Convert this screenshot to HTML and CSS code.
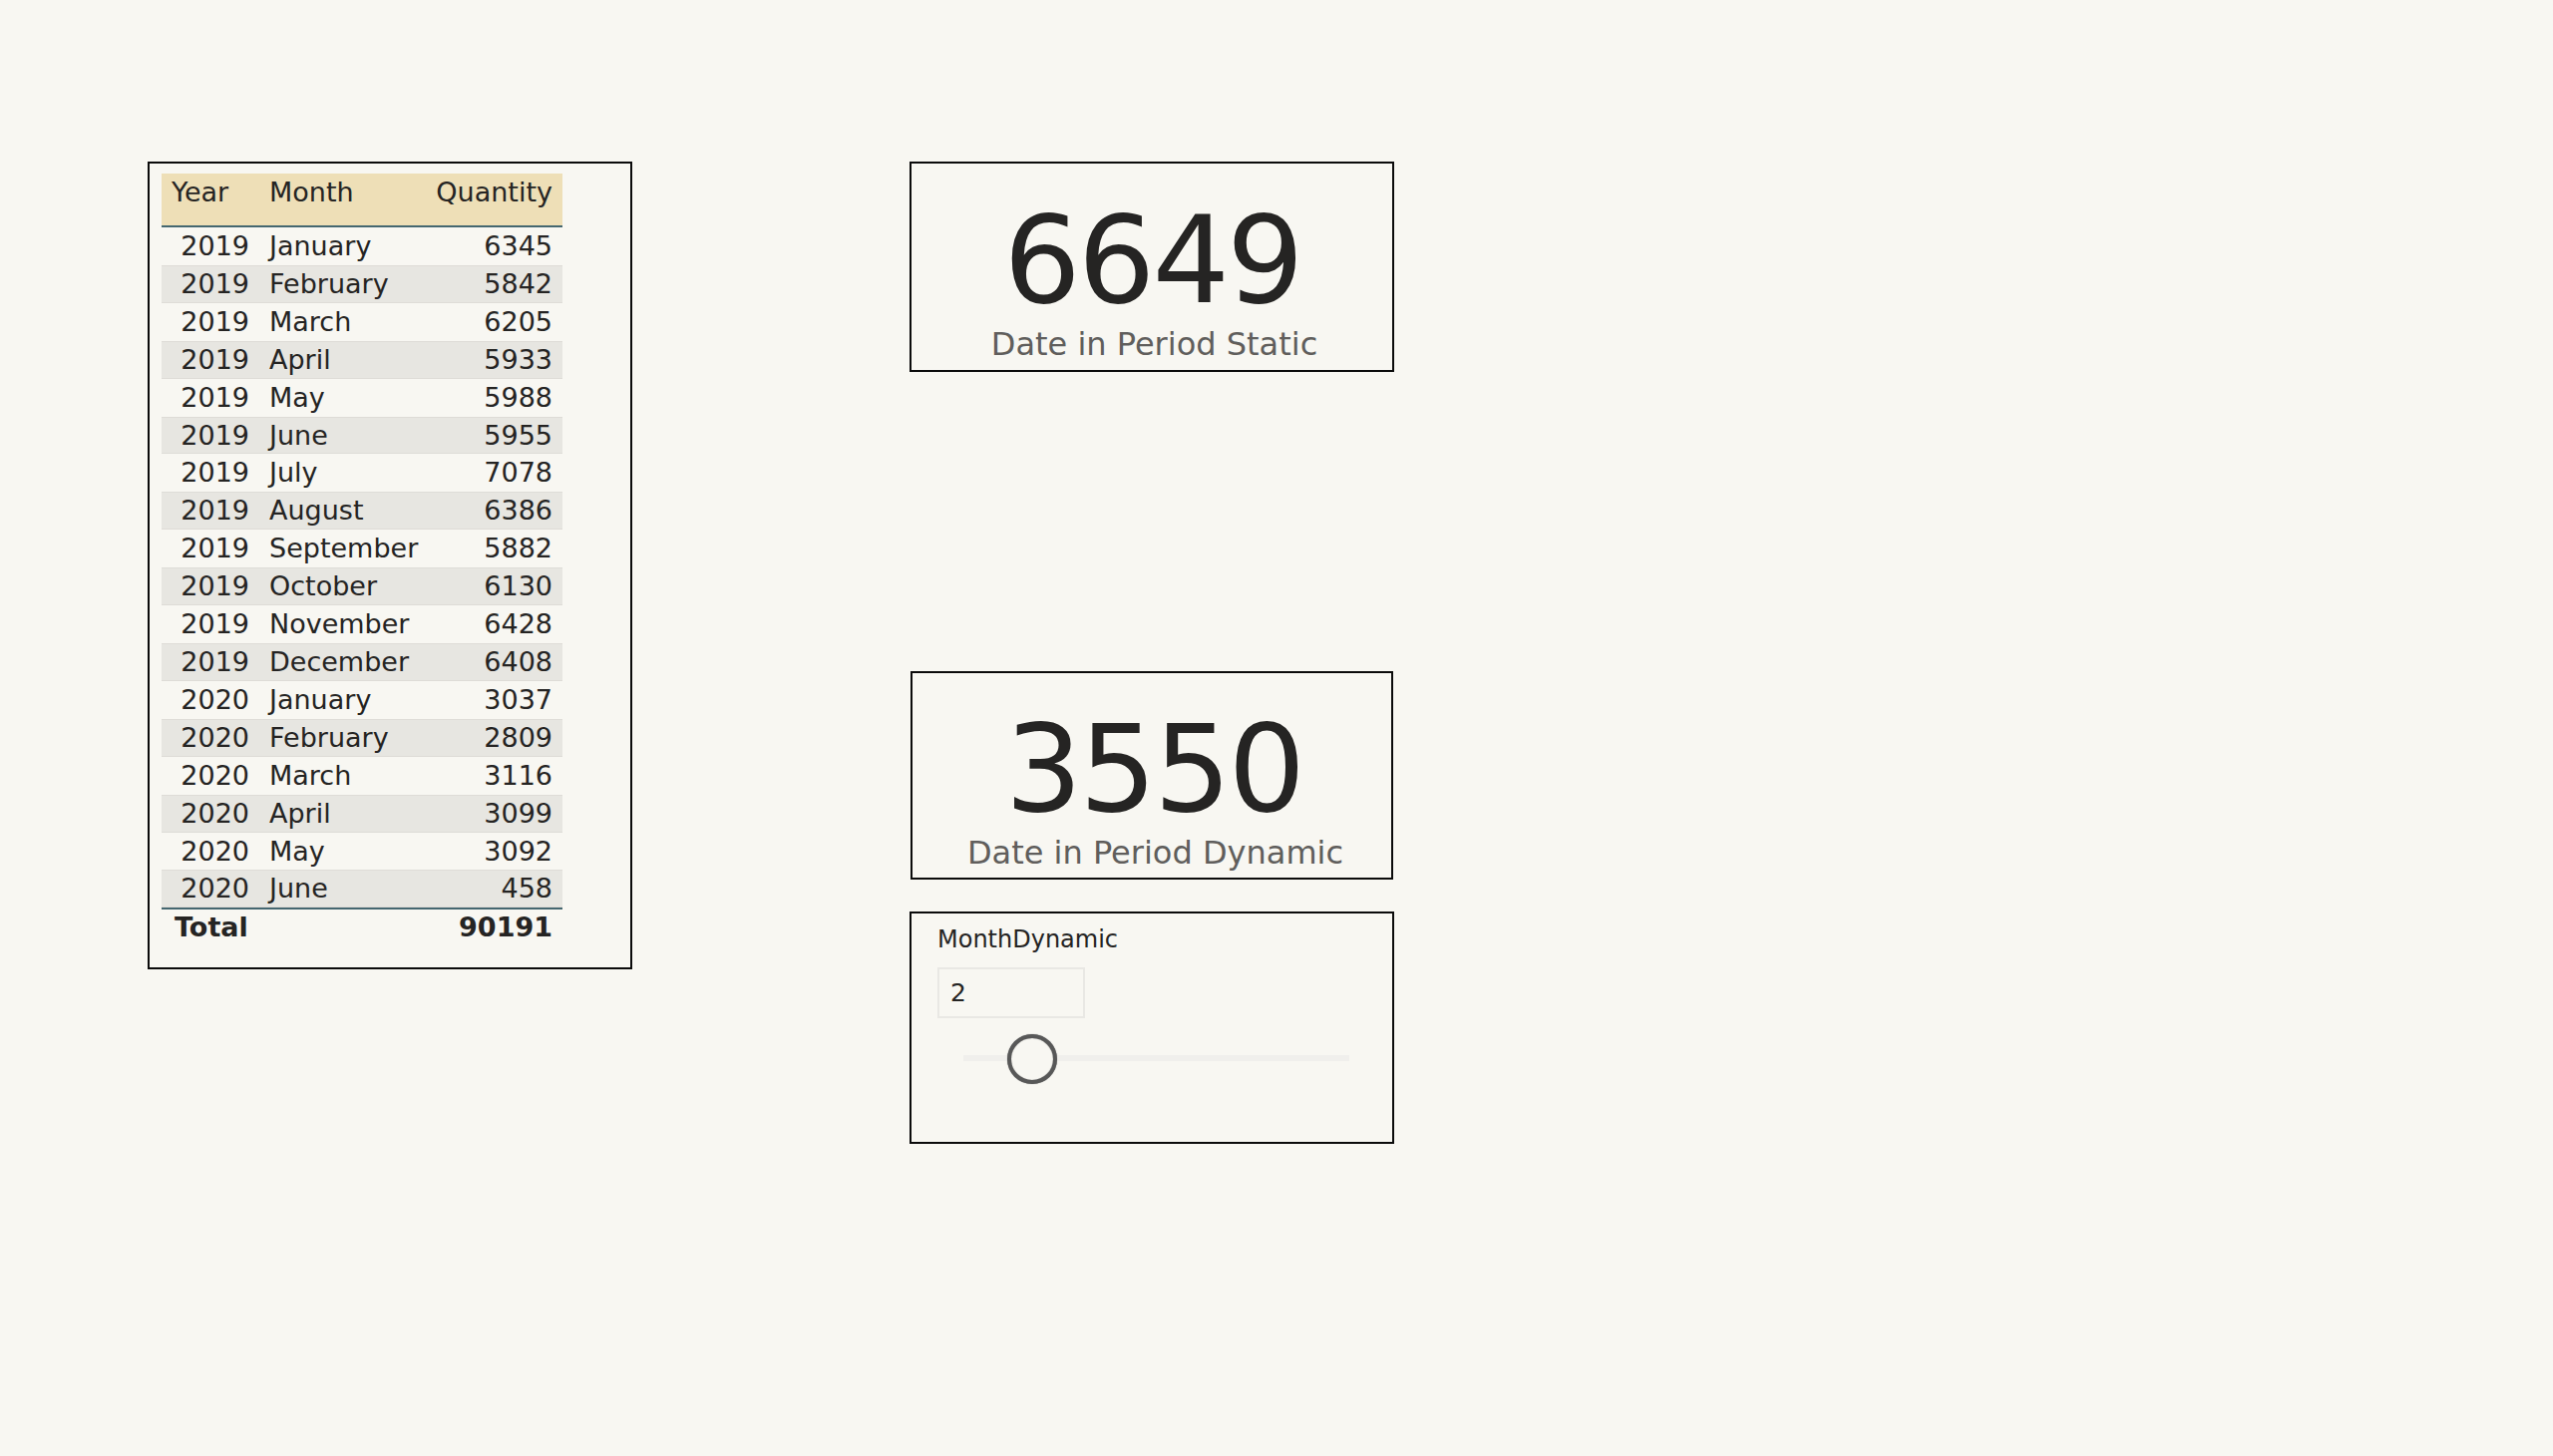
FILE: index.html
```html
<!DOCTYPE html>
<html lang="en">
<head>
<meta charset="utf-8">
<title>Report</title>
<link rel="stylesheet" href="styles.css">
</head>
<body>
<div class="canvas">
  <div class="table-visual">
    <table class="matrix">
      <colgroup><col class="c-year"><col class="c-month"><col class="c-qty"></colgroup>
      <thead>
        <tr><th class="l">Year</th><th class="l">Month</th><th class="r">Quantity</th></tr>
      </thead>
      <tbody>
        <tr><td class="r">2019</td><td>January</td><td class="r">6345</td></tr>
        <tr class="alt"><td class="r">2019</td><td>February</td><td class="r">5842</td></tr>
        <tr><td class="r">2019</td><td>March</td><td class="r">6205</td></tr>
        <tr class="alt"><td class="r">2019</td><td>April</td><td class="r">5933</td></tr>
        <tr><td class="r">2019</td><td>May</td><td class="r">5988</td></tr>
        <tr class="alt"><td class="r">2019</td><td>June</td><td class="r">5955</td></tr>
        <tr><td class="r">2019</td><td>July</td><td class="r">7078</td></tr>
        <tr class="alt"><td class="r">2019</td><td>August</td><td class="r">6386</td></tr>
        <tr><td class="r">2019</td><td>September</td><td class="r">5882</td></tr>
        <tr class="alt"><td class="r">2019</td><td>October</td><td class="r">6130</td></tr>
        <tr><td class="r">2019</td><td>November</td><td class="r">6428</td></tr>
        <tr class="alt"><td class="r">2019</td><td>December</td><td class="r">6408</td></tr>
        <tr><td class="r">2020</td><td>January</td><td class="r">3037</td></tr>
        <tr class="alt"><td class="r">2020</td><td>February</td><td class="r">2809</td></tr>
        <tr><td class="r">2020</td><td>March</td><td class="r">3116</td></tr>
        <tr class="alt"><td class="r">2020</td><td>April</td><td class="r">3099</td></tr>
        <tr><td class="r">2020</td><td>May</td><td class="r">3092</td></tr>
        <tr class="alt"><td class="r">2020</td><td>June</td><td class="r">458</td></tr>
      </tbody>
      <tfoot>
        <tr><td class="l">Total</td><td></td><td class="r">90191</td></tr>
      </tfoot>
    </table>
  </div>

  <div class="right-col">
    <div class="kpi">
      <div class="kpi-value">6649</div>
      <div class="kpi-label">Date in Period Static</div>
    </div>
    <div class="kpi kpi-2">
      <div class="kpi-value">3550</div>
      <div class="kpi-label">Date in Period Dynamic</div>
    </div>
    <div class="slicer">
      <div class="slicer-title">MonthDynamic</div>
      <div class="slicer-input">2</div>
      <div class="slider">
        <div class="track"></div>
        <div class="thumb"></div>
      </div>
    </div>
  </div>
</div>
</body>
</html>
```

FILE: styles.css
```css
html, body {
  margin: 0;
  padding: 0;
  background: #f8f7f2;
}
body {
  font-family: "DejaVu Sans", Verdana, sans-serif;
  color: #252423;
  width: 2560px;
  height: 1460px;
  overflow: hidden;
}
.canvas {
  display: flex;
  align-items: flex-start;
  gap: 278px;
  padding: 162px 0 0 148px;
}

/* table visual */
.table-visual {
  box-sizing: border-box;
  width: 486px;
  height: 810px;
  border: 2px solid #0b0b0b;
  padding: 10px 0 0 12px;
}
.matrix {
  width: 402px;
  table-layout: fixed;
  border-collapse: separate;
  border-spacing: 0;
  font-size: 27px;
  color: #252423;
}
.c-year { width: 98px; }
.c-month { width: 154px; }
.c-qty { width: 150px; }
.matrix th {
  font-weight: normal;
  background: #eedfb7;
  line-height: 32px;
  padding: 3px 10px 17px 10px;
  border-bottom: 2px solid #456770;
  white-space: nowrap;
}
.matrix td {
  height: 37.9px;
  line-height: 37.9px;
  padding: 0 10px;
  white-space: nowrap;
}
.matrix .l { text-align: left; }
.matrix .r { text-align: right; }
.matrix tbody tr.alt td {
  background: #e7e6e1;
  box-shadow: inset 0 1px 0 #dedcd7, inset 0 -1px 0 #dedcd7;
}
.matrix tfoot td {
  font-weight: bold;
  border-top: 2px solid #456770;
  height: 36px;
  line-height: 36px;
}
.matrix tfoot td.l { padding-left: 13px; }

/* right column */
.right-col {
  display: flex;
  flex-direction: column;
}
.kpi {
  box-sizing: border-box;
  width: 486px;
  height: 211px;
  border: 2px solid #0b0b0b;
  padding-top: 36px;
  text-align: center;
  padding-left: 1px;
}
.kpi-2 {
  width: 484px;
  height: 209px;
  margin-top: 300px;
  margin-left: 1px;
  padding-top: 35px;
  padding-left: 4px;
}
.kpi-value {
  font-size: 122px;
  line-height: 123px;
  letter-spacing: -3px;
  color: #252423;
}
.kpi-label {
  font-size: 32px;
  line-height: 44px;
  color: #605e5c;
  margin-left: 4px;
}
.kpi-2 .kpi-label {
  margin-left: 3px;
}

/* slicer */
.slicer {
  box-sizing: border-box;
  width: 486px;
  height: 233px;
  margin-top: 32px;
  border: 2px solid #0b0b0b;
  padding: 11px 0 0 26px;
}
.slicer-title {
  font-size: 24px;
  line-height: 30px;
  color: #252423;
}
.slicer-input {
  box-sizing: border-box;
  width: 148px;
  height: 51px;
  margin-top: 13px;
  border: 2px solid #e9e8e4;
  font-size: 25px;
  line-height: 47px;
  padding-left: 11px;
  color: #252423;
}
.slider {
  position: relative;
  box-sizing: border-box;
  width: 387px;
  height: 50px;
  margin: 16px 0 0 26px;
  padding-top: 21px;
}
.track {
  height: 6px;
  background: #f0efec;
}
.thumb {
  position: absolute;
  left: 44px;
  top: 0;
  box-sizing: border-box;
  width: 50px;
  height: 50px;
  border: 4px solid #585858;
  border-radius: 50%;
  background: #f8f7f2;
  box-shadow: 0 0 1px #777, inset 0 0 1px #777;
}
```
